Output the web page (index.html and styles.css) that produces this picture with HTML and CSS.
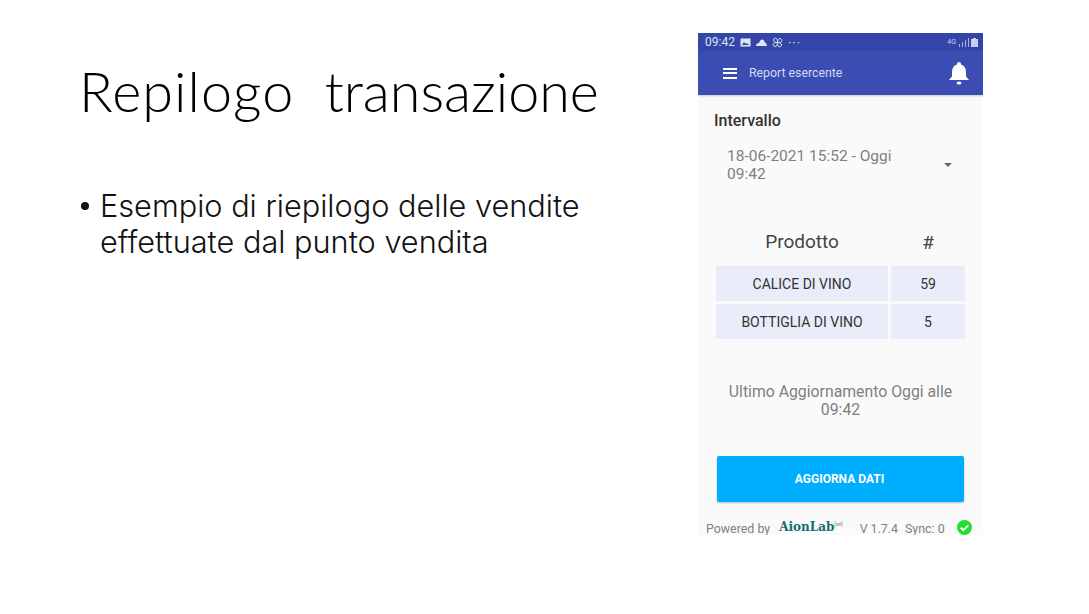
FILE: index.html
```html
<!DOCTYPE html>
<html lang="en">
<head>
    <meta charset="UTF-8">
    <meta name="viewport" content="width=device-width, initial-scale=1.0">
    <title>Repilogo transazione</title>
    <link rel="stylesheet" href="styles.css">
</head>
<body>
    <div class="slide">
        <div class="slide-text">
            <h1><span class="first-word">Repilogo</span>&nbsp; transazione</h1>
            <ul>
                <li>Esempio di riepilogo delle vendite effettuate dal punto vendita</li>
            </ul>
        </div>

        <div class="phone">
            <div class="status-bar">
                <span class="clock">09:42</span>
                <svg class="status-icon" width="11" height="9" viewBox="0 0 11 9"><rect x="0.5" y="0.5" width="10" height="8" fill="#dfe3f5"/><path d="M2 7l2-3 2 2 1-1 2 2z" fill="#3346a8"/></svg>
                <svg class="status-icon" width="11" height="7" viewBox="0 0 11 7"><path d="M0 7c0-2 1-3 3-3 .5-2 2-3.500 3-3.500 1.500 0 2.500 1.500 3 3 1 .5 2 2 2 3.500z" fill="#dfe3f5"/></svg>
                <svg class="status-icon" width="11" height="11" viewBox="0 0 11 11" fill="none" stroke="#dfe3f5"><path d="M5.500 5.500C3 5.500 1.500 4.500 1.500 3s2-2.500 3-1.500 1 2.500 1 4zM5.500 5.500c0-2.500 1-4 2.500-4s2.500 2 1.500 3-2.500 1-4 1zM5.500 5.500c2.500 0 4 1 4 2.500s-2 2.500-3 1.500-1-2.500-1-4zM5.500 5.500c0 2.500-1 4-2.500 4s-2.500-2-1.500-3 2.500-1 4-1z"/></svg>
                <span class="dots">&middot;&middot;&middot;</span>
                <span class="status-right">
                    <span class="net">4G</span>
                    <svg width="11" height="9" viewBox="0 0 11 9"><path d="M1 9V6h1v3zM4 9V4h1v5zM7 9V2h1v7zM10 9V0h1v9z" fill="#aab3e0"/></svg>
                    <svg width="7" height="9" viewBox="0 0 7 9"><path d="M2 0h3v1h2v8H0V1h2z" fill="#c9cfee"/></svg>
                </span>
            </div>
            <div class="app-bar">
                <div class="burger"><span></span><span></span><span></span></div>
                <span class="app-title">Report esercente</span>
                <svg class="bell" width="20" height="23" viewBox="0 0 20 23"><path d="M10 0c1.200 0 2 .8 2 2v.6c3.300 1 5 3.700 5 7.400v4.500l3 3.500H0l3-3.500V10c0-3.700 1.700-6.400 5-7.400V2c0-1.200.8-2 2-2z" fill="#fff"/><ellipse cx="10" cy="21" rx="2.500" ry="1.600" fill="#fff"/></svg>
            </div>

            <div class="phone-body">
                <h2>Intervallo</h2>
                <div class="picker">
                    <span>18-06-2021 15:52 - Oggi 09:42</span>
                    <i class="caret"></i>
                </div>

                <div class="table">
                    <div class="th">Prodotto</div>
                    <div class="th th-num">#</div>
                    <div class="td">CALICE DI VINO</div>
                    <div class="td">59</div>
                    <div class="td">BOTTIGLIA DI VINO</div>
                    <div class="td">5</div>
                </div>

                <p class="updated">Ultimo Aggiornamento Oggi alle 09:42</p>

                <button class="refresh">AGGIORNA DATI</button>

                <div class="powered">
                    <span>Powered by</span>
                    <span class="brand">AionLab<sup>[on]</sup></span>
                    <span class="version">V 1.7.4</span>
                    <span class="sync">Sync: 0</span>
                    <svg class="ok" width="15" height="15" viewBox="0 0 15 15"><circle cx="7.500" cy="7.500" r="7.500" fill="#1fe02f"/><path d="M3.800 7.700l2.600 2.500 4.800-4.800" fill="none" stroke="#fff" stroke-width="2"/></svg>
                </div>
            </div>
        </div>
    </div>
</body>
</html>
```

FILE: styles.css
```css
body {
    margin: 0;
    background-color: #fff;
    font-family: Roboto, sans-serif;
}
.slide {
    display: flex;
    justify-content: space-between;
    width: 1089px;
    height: 614px;
    overflow: hidden;
    padding: 33px 106px 0 80px;
    box-sizing: border-box;
}
.slide-text {
    width: 530px;
    color: #111;
}
.slide-text h1 {
    font-family: Lato, sans-serif;
    font-weight: 300;
    font-size: 55.700px;
    line-height: 66px;
    margin: 25px 0 0 -1px;
    white-space: nowrap;
    color: #000;
}
.first-word {
    letter-spacing: 1.100px;
}
.slide-text ul {
    list-style: none;
    margin: 64px 0 0;
    padding: 0;
}
.slide-text li {
    position: relative;
    padding-left: 20px;
    font-family: Inter, sans-serif;
    font-weight: 300;
    font-size: 30.700px;
    line-height: 36px;
}
.slide-text li::before {
    content: "";
    position: absolute;
    left: 1px;
    top: 14px;
    width: 8px;
    height: 8px;
    border-radius: 50%;
    background-color: #111;
}
.phone {
    width: 285px;
    height: 502px;
    overflow: hidden;
    background-color: #fafafa;
    flex-shrink: 0;
}
.status-bar {
    display: flex;
    align-items: center;
    gap: 5px;
    height: 18px;
    padding: 0 5px 0 7px;
    background-color: #3346a8;
    color: #dfe3f5;
    font-size: 12px;
}
.dots {
    font-size: 13px;
    letter-spacing: 1px;
}
.status-right {
    display: flex;
    align-items: center;
    gap: 2px;
    margin-left: auto;
}
.net {
    font-size: 7px;
    color: #c9cfee;
}
.app-bar {
    display: flex;
    align-items: center;
    height: 44px;
    padding: 0 14px 0 25px;
    background-color: #3b4db3;
    box-shadow: 0 1px 2px rgba(0, 0, 0, 0.2);
}
.burger {
    display: flex;
    flex-direction: column;
    gap: 2.500px;
    width: 14px;
}
.burger span {
    height: 2px;
    background-color: #fff;
}
.app-title {
    margin-left: 12px;
    flex: 1;
    color: #d5daf2;
    font-size: 12.300px;
}
.phone-body {
    padding: 0 18px 0 16px;
}
.phone-body h2 {
    margin: 16px 0 0;
    font-size: 16px;
    line-height: 20px;
    font-weight: 500;
    color: #333;
}
.picker {
    display: flex;
    align-items: center;
    justify-content: space-between;
    margin: 16px 13px 0 13px;
    font-size: 15.500px;
    line-height: 18px;
    color: #808080;
}
.picker span {
    width: 190px;
}
.caret {
    border-left: 4px solid transparent;
    border-right: 4px solid transparent;
    border-top: 4px solid #666;
}
.table {
    display: grid;
    grid-template-columns: 172px 74px;
    grid-template-rows: 39px 35px 35px;
    gap: 3px;
    margin: 41px 0 0 2px;
    color: #333;
    text-align: center;
}
.th {
    font-size: 19px;
    line-height: 35px;
    color: #444;
}
.th-num {
    line-height: 37px;
}
.td {
    line-height: 36px;
    font-size: 14px;
    background-color: #e9edf9;
}
.updated {
    margin: 44px 12px 0 14px;
    text-align: center;
    font-size: 15.800px;
    line-height: 18px;
    color: #808080;
}
.refresh {
    display: block;
    width: 247px;
    height: 46px;
    margin: 37px 0 0 3px;
    padding: 0 7px 0 5px;
    border: none;
    border-radius: 2px;
    background-color: #00aeff;
    color: #fff;
    font-family: Roboto, sans-serif;
    font-size: 12px;
    font-weight: 700;
    box-shadow: 0 1px 2px rgba(0, 0, 0, 0.25);
}
.powered {
    display: flex;
    align-items: center;
    margin: 19px -12px 0 -8px;
    font-size: 12.400px;
    color: #808080;
}
.brand {
    margin-left: 9px;
    margin-top: -3px;
    font-family: "DejaVu Serif", serif;
    font-size: 12px;
    font-weight: 700;
    color: #0f6f73;
}
.brand sup {
    font-family: Roboto, sans-serif;
    font-size: 5px;
    font-weight: 400;
    color: #777;
}
.version {
    margin-left: 17px;
}
.sync {
    margin-left: 7px;
}
.ok {
    margin-left: 12px;
    margin-top: -3px;
}
```
